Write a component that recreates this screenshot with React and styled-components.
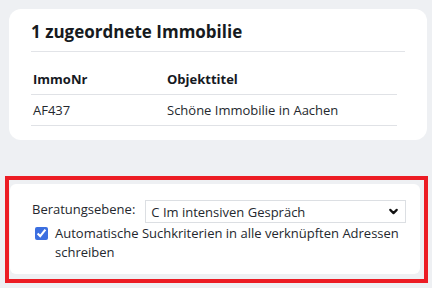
import React from 'react';
import styled, { createGlobalStyle } from 'styled-components';
import { ChevronDown } from 'lucide-react';

const GlobalStyle = createGlobalStyle`
  html, body {
    margin: 0;
    padding: 0;
    background: #eef0f3;
  }
  body {
    font-family: "Open Sans", "Liberation Sans", sans-serif;
    color: #212529;
    font-size: 13px;
  }
  * { box-sizing: border-box; }
`;

const Page = styled.div`
  width: 432px;
  height: 288px;
  overflow: hidden;
  padding-top: 9px;
`;

const Card = styled.section`
  margin: 0 5px 0 9px;
  background: #fff;
  border-radius: 12px;
  padding: 11px 22px 14px 22px;
`;

const Title = styled.h2`
  margin: 0;
  font-size: 17px;
  line-height: 24px;
  font-weight: 700;
  color: #161a20;
  padding-bottom: 7px;
  border-bottom: 1px solid #e2e4e8;
`;

const Table = styled.table`
  margin-top: 12px;
  width: 366px;
  border-collapse: collapse;
`;

const Cell = styled.td`
  padding: 6px 2px;
  line-height: 18px;
  font-size: 13px;
  text-align: left;
  border-bottom: 1px solid #e0e2e6;
  font-weight: ${(p) => (p.$head ? 700 : 400)};
  color: ${(p) => (p.$head ? '#15191f' : '#24282e')};
  width: ${(p) => p.$w || 'auto'};
`;

const Highlight = styled.div`
  margin: 36px 0 0 5px;
  width: 423px;
  border: 4px solid #ec1c24;
  padding: 4px 4px 5px 1px;
`;

const Panel = styled.div`
  background: #fff;
  border-radius: 6px;
  padding: 16px 14px 12px 22px;
`;

const FieldRow = styled.div`
  display: flex;
  align-items: flex-start;
`;

const Label = styled.label`
  line-height: 18px;
  margin-right: 10px;
  color: #24282e;
  white-space: nowrap;
`;

const SelectWrap = styled.div`
  position: relative;
  flex: 1;
  height: 23px;
`;

const Select = styled.select`
  appearance: none;
  width: 100%;
  height: 23px;
  border: 1px solid #dcdfe3;
  border-radius: 0;
  background: #fff;
  font-family: "Open Sans", "Liberation Sans", sans-serif;
  font-size: 13px;
  color: #24282e;
  padding: 0 20px 0 5px;
  outline: none;
`;

const Chevron = styled.span`
  position: absolute;
  right: 6px;
  top: 5px;
  display: flex;
  pointer-events: none;
  color: #111;
`;

const CheckRow = styled.label`
  display: flex;
  align-items: flex-start;
  margin-top: 1px;
  line-height: 19px;
  color: #24282e;
`;

const Checkbox = styled.input`
  width: 13px;
  height: 13px;
  margin: 3px 7px 0 3px;
  flex: none;
  accent-color: #3c6fe0;
`;

export default function App() {
  return (
    <Page>
      <GlobalStyle />
      <Card>
        <Title>1 zugeordnete Immobilie</Title>
        <Table>
          <tbody>
            <tr>
              <Cell $head $w="134px">ImmoNr</Cell>
              <Cell $head>Objekttitel</Cell>
            </tr>
            <tr>
              <Cell>AF437</Cell>
              <Cell>Schöne Immobilie in Aachen</Cell>
            </tr>
          </tbody>
        </Table>
      </Card>

      <Highlight>
        <Panel>
          <FieldRow>
            <Label htmlFor="ebene">Beratungsebene:</Label>
            <SelectWrap>
              <Select id="ebene" defaultValue="C">
                <option value="C">C Im intensiven Gespräch</option>
              </Select>
              <Chevron>
                <ChevronDown size={13} strokeWidth={4} />
              </Chevron>
            </SelectWrap>
          </FieldRow>
          <CheckRow>
            <Checkbox type="checkbox" defaultChecked />
            <span>Automatische Suchkriterien in alle verknüpften Adressen schreiben</span>
          </CheckRow>
        </Panel>
      </Highlight>
    </Page>
  );
}
